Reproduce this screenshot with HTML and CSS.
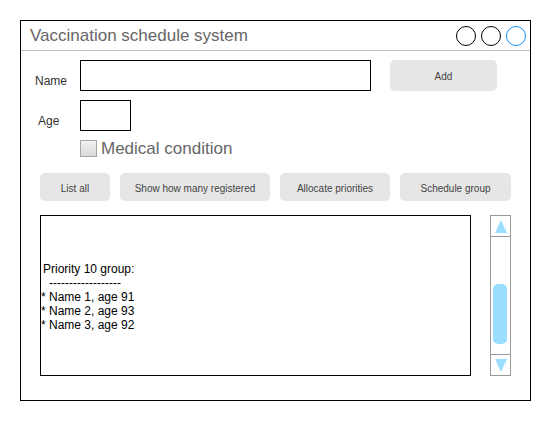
FILE: index.html
```html
<!DOCTYPE html>
<html>
<head>
<meta charset="utf-8">
<title>Vaccination schedule system</title>
<link rel="stylesheet" href="styles.css">
</head>
<body>
<div class="frame">
  <div class="titlebar">
    <span class="title">Vaccination schedule system</span>
    <div class="controls">
      <span class="circle"></span>
      <span class="circle"></span>
      <span class="circle blue"></span>
    </div>
  </div>
  <div class="content">
    <div class="row row-name">
      <span class="label label-name">Name</span>
      <div class="input input-name"></div>
      <div class="btn btn-add">Add</div>
    </div>
    <div class="row row-age">
      <span class="label label-age">Age</span>
      <div class="input input-age"></div>
    </div>
    <div class="row row-check">
      <span class="checkbox"></span>
      <span class="check-text">Medical condition</span>
    </div>
    <div class="row row-buttons">
      <div class="btn w70">List all</div>
      <div class="btn w150">Show how many registered</div>
      <div class="btn w110">Allocate priorities</div>
      <div class="btn w111">Schedule group</div>
    </div>
    <div class="row row-output">
      <div class="output">
        <div class="output-text">
          <div class="line indent-priority">Priority 10 group:</div>
          <div class="line indent-dash">------------------</div>
          <div class="line">* Name 1, age 91</div>
          <div class="line">* Name 2, age 93</div>
          <div class="line">* Name 3, age 92</div>
        </div>
      </div>
      <div class="scrollbar">
        <div class="arrow-cell arrow-up">
          <svg width="12" height="13" viewBox="0 0 12 13"><polygon points="6,0 12,13 0,13" fill="#99ddff"/></svg>
        </div>
        <div class="track"><div class="thumb"></div></div>
        <div class="arrow-cell arrow-down">
          <svg width="12" height="13" viewBox="0 0 12 13"><polygon points="0,0 12,0 6,13" fill="#99ddff"/></svg>
        </div>
      </div>
    </div>
  </div>
</div>
</body>
</html>
```

FILE: styles.css
```css
html, body {
  margin: 0;
  padding: 0;
  background: #ffffff;
}

body {
  font-family: "Liberation Sans", Arial, sans-serif;
}

.frame {
  margin: 20px 0 0 20px;
  width: 511px;
  height: 381px;
  border: 1px solid #000;
  box-sizing: border-box;
  background: #fff;
}

.titlebar {
  height: 30px;
  box-sizing: border-box;
  border-bottom: 1px solid #c0c0c0;
  display: flex;
  align-items: center;
  justify-content: space-between;
  padding: 0 4px 0 9px;
}

.title {
  font-size: 17px;
  color: #666;
  line-height: 20px;
}

.controls {
  display: flex;
  gap: 5px;
  margin-top: 1px;
}

.circle {
  width: 20px;
  height: 20px;
  box-sizing: border-box;
  border: 1px solid #000;
  border-radius: 50%;
}

.circle.blue {
  border-color: #1a8cff;
}

.content {
  display: flex;
  flex-direction: column;
}

.row {
  display: flex;
  align-items: center;
}

.row-name {
  margin-top: 9px;
}

.label {
  font-size: 12px;
  line-height: 14px;
  color: #333;
  box-sizing: border-box;
  width: 59px;
  align-self: flex-start;
}

.label-name { padding-left: 14px; padding-top: 14px; }
.label-age { padding-left: 17px; padding-top: 14px; }

.input {
  border: 1px solid #000;
  box-sizing: border-box;
  height: 31px;
  background: #fff;
}

.input-name { width: 291px; }
.input-age { width: 51px; }

.btn {
  height: 28px;
  background: #e6e6e6;
  border-radius: 5px;
  display: flex;
  align-items: center;
  justify-content: center;
  font-size: 10px;
  color: #444;
  box-sizing: border-box;
  padding-top: 2px;
}

.btn-add {
  width: 107px;
  height: 31px;
  margin-left: 19px;
}

.row-age {
  margin-top: 9px;
}

.row-check {
  margin-top: 9px;
  padding-left: 59px;
  height: 17px;
}

.checkbox {
  width: 17px;
  height: 17px;
  box-sizing: border-box;
  border: 1px solid #a6a6a6;
  background: linear-gradient(#f2f2f2, #d9d9d9);
}

.check-text {
  font-size: 17px;
  line-height: 17px;
  color: #666;
  margin-left: 4px;
}

.row-buttons {
  margin-top: 16px;
  padding-left: 19px;
  gap: 10px;
}

.w70 { width: 70px; }
.w150 { width: 150px; }
.w110 { width: 110px; }
.w111 { width: 111px; }

.row-output {
  margin-top: 14px;
  padding-left: 19px;
  align-items: stretch;
  gap: 19px;
}

.output {
  width: 431px;
  height: 161px;
  border: 1px solid #000;
  box-sizing: border-box;
  display: flex;
  align-items: center;
}

.output-text {
  font-size: 12px;
  line-height: 14px;
  color: #000;
  margin-top: 3px;
}

.line {
  white-space: pre;
}

.indent-priority { padding-left: 2px; }
.indent-dash { padding-left: 8px; }

.scrollbar {
  width: 21px;
  height: 161px;
  box-sizing: border-box;
  border: 1px solid #999;
  display: flex;
  flex-direction: column;
}

.arrow-cell {
  height: 20px;
  flex: none;
  display: flex;
  align-items: center;
  justify-content: center;
}

.arrow-up {
  border-bottom: 1px solid #999;
}

.arrow-down {
  border-top: 1px solid #999;
}

.track {
  flex: 1;
  padding: 47px 0 0 2px;
  box-sizing: border-box;
}

.thumb {
  width: 14px;
  height: 60px;
  border-radius: 5px;
  background: #99ddff;
}
```
